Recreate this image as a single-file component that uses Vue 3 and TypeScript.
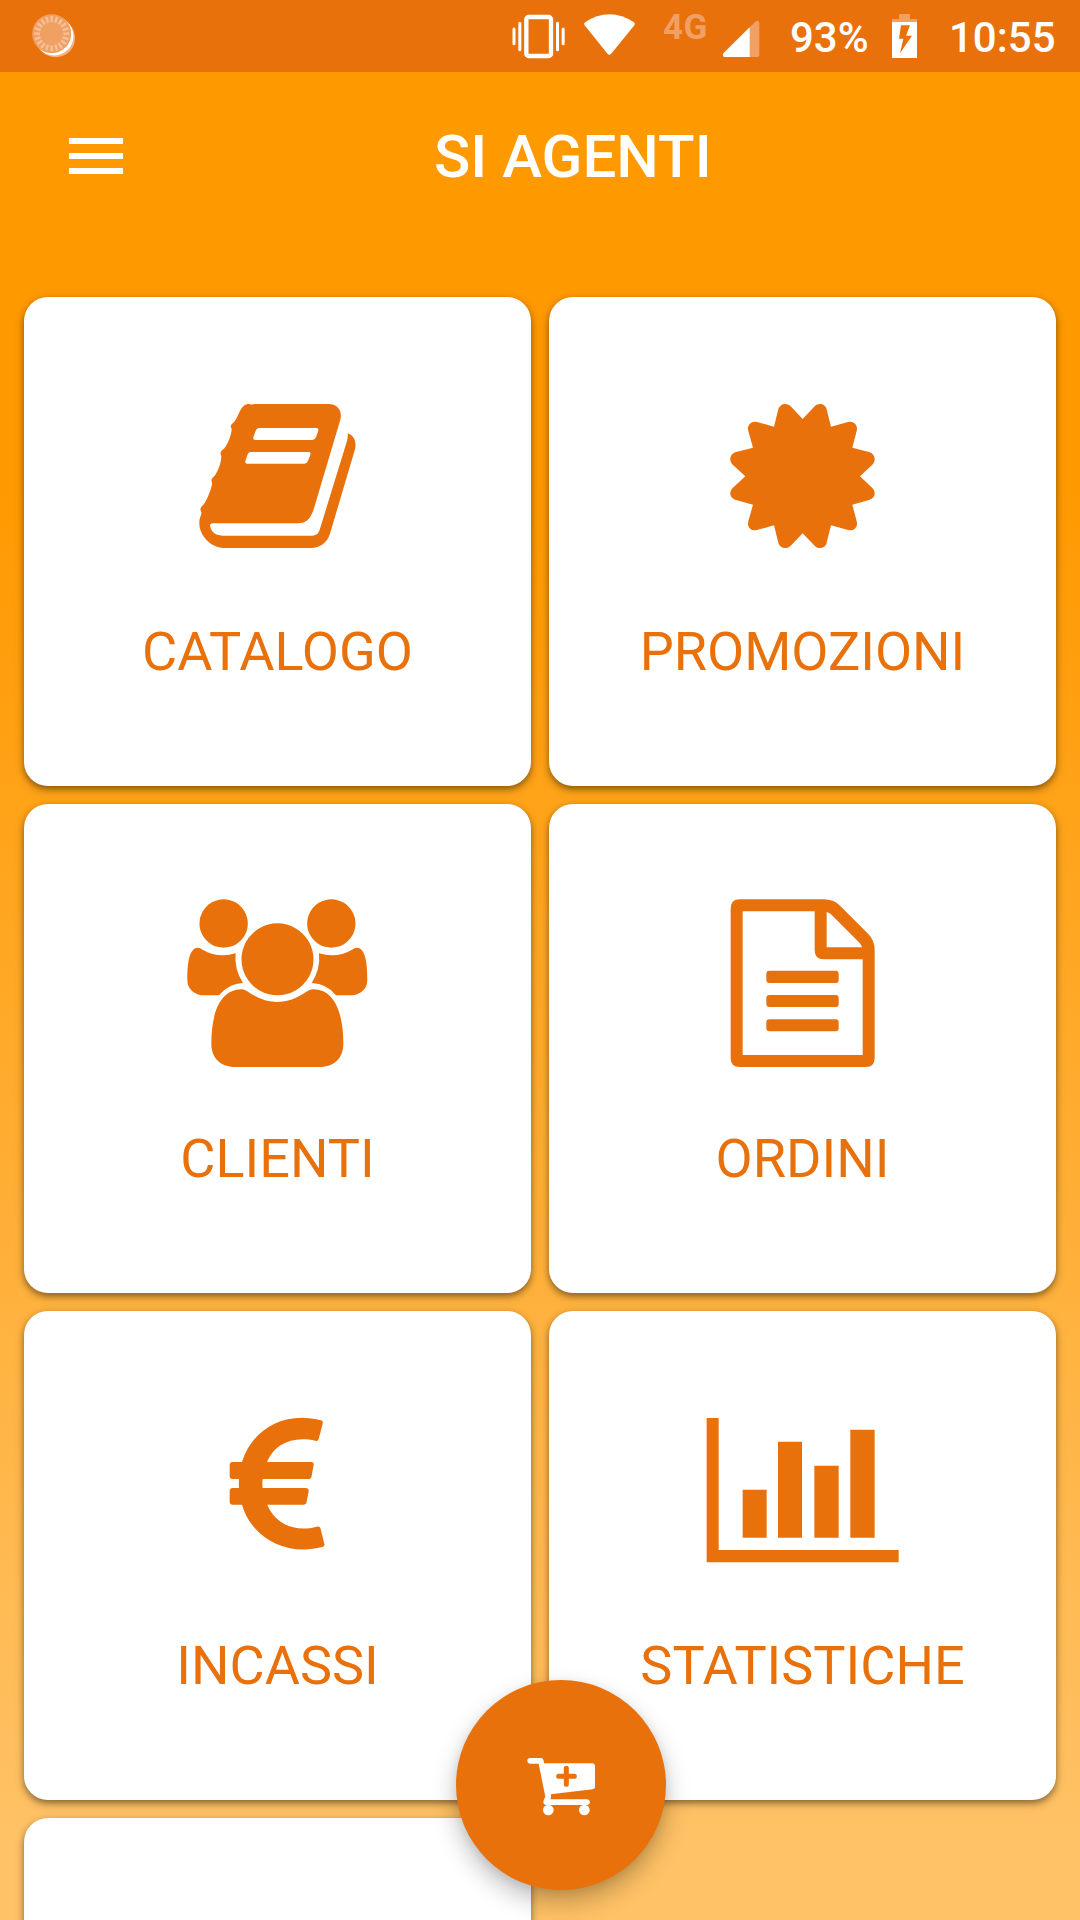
<script setup lang="ts">
interface Shape {
  d: string
}

interface Tile {
  label: string
  viewBox: string
  shapes: Shape[]
}

const tiles: Tile[] = [
  {
    label: 'CATALOGO',
    viewBox: '-36 -9 657 600',
    shapes: [
      {
        d: 'M203 72Q209 71 214 74Q218 72 226 72H446C472 72 488 92 481 119L402 385C392 417 379 430 353 430H98C91 430 89 435 91 441C95 458 109 467 130 467H393C408 467 416 461 420 446L501 183Q504 173 503 160C520 165 531 184 525 208L450 461C442 487 420 504 392 504H135C94 504 57 468 58 427C58 413 64 408 64 399C65 393 59 391 62 384C66 376 70 376 76 365C85 350 94 326 96 312C97 304 92 302 96 296C99 290 103 290 108 281C118 264 123 247 124 231C124 224 119 221 123 215C127 209 132 209 139 196C147 183 153 166 155 151C156 144 150 141 153 136C155 131 161 129 167 119C178 102 182 76 203 72ZM237 144Q230 144 227 152L220 172Q218 180 226 180H397Q405 180 408 172L415 152Q417 144 409 144ZM213 216Q206 216 203 223L196 243Q194 251 202 251H373Q381 251 384 243L391 224Q394 216 386 216Z',
      },
    ],
  },
  {
    label: 'PROMOZIONI',
    viewBox: '-51 -9 657 600',
    shapes: [
      {
        d: 'M278 117L314 79C325 66 347 71 350 88L363 140L414 126C431 121 445 136 440 153L427 203L477 216C494 220 500 241 487 254L450 289L487 324C500 337 494 356 477 360L427 374L440 424C445 441 431 455 414 450L363 436L350 488C347 504 325 510 314 497L278 460L242 497C230 510 209 504 205 488L192 436L141 450C124 455 110 441 115 424L129 374L78 360C61 356 55 337 68 324L106 289L68 254C55 241 61 220 78 216L129 203L115 153C110 136 124 121 141 126L192 140L205 88C209 71 230 66 242 79Z',
      },
    ],
  },
  {
    label: 'CLIENTI',
    viewBox: '-6 11 657 600',
    shapes: [
      { d: 'M161 57A72.500 72.500 0 1 1 160.900 57Z' },
      { d: 'M484 57A72.500 72.500 0 1 1 483.900 57Z' },
      { d: 'M322.500 129A108 108 0 1 1 322.400 129Z' },
      {
        d: 'M84 202Q90 202 98 208C128 225 160 230 197 219Q192 266 219 308Q175 310 147 345H106C74 345 52 328 52 298C52 258 55 202 84 202Z',
      },
      {
        d: 'M560 202Q554 202 546 208C516 225 485 230 447 219Q452 266 425 308Q471 310 498 345H538C570 345 592 328 592 298C592 258 589 202 560 202Z',
      },
      {
        d: 'M215 327Q223 326 235 335C294 375 351 375 408 335Q420 326 429 327C496 327 520 402 520 491C520 533 492 560 449 560H196C152 560 124 533 124 491C124 402 148 328 215 327Z',
      },
    ],
  },
  {
    label: 'ORDINI',
    viewBox: '-51 11 657 600',
    shapes: [
      {
        d: 'M89 57H341Q371 57 390 76L475 161Q494 180 494 210V533Q494 560 467 560H89Q62 560 62 533V84Q62 57 89 57ZM98 93V524H458V237H341Q314 237 314 210V93ZM350 95V201H456Q454 194 449 188L363 102Q358 97 350 95Z',
      },
      { d: 'M178 271H377Q386 271 386 280V299Q386 308 377 308H178Q169 308 169 299V280Q169 271 178 271Z' },
      { d: 'M178 344H377Q386 344 386 353V371Q386 380 377 380H178Q169 380 169 371V353Q169 344 178 344Z' },
      { d: 'M178 417H377Q386 417 386 426V444Q386 453 377 453H178Q169 453 169 444V426Q169 417 178 417Z' },
    ],
  },
  {
    label: 'INCASSI',
    viewBox: '-126 -28 657 600',
    shapes: [
      {
        d: 'M333 60Q340 62 338 70L326 116Q324 124 316 121C246 106 192 132 171 185H303Q312 185 311 194L305 226Q304 236 294 236H158Q156 250 158 263H287Q297 263 296 273L290 304Q289 313 280 313H172C194 367 250 398 321 379Q330 377 332 386L343 430Q345 438 337 440C221 470 121 404 96 313H68Q59 313 59 304V272Q59 263 68 263H87Q86 250 87 236H68Q59 236 59 227V194Q59 185 68 185H96C126 87 223 31 333 60Z',
      },
    ],
  },
  {
    label: 'STATISTICHE',
    viewBox: '9 -27 657 600',
    shapes: [
      { d: 'M50 54H86V450H626V487H50Z' },
      { d: 'M158 269H230V413H158Z' },
      { d: 'M264 125H336V413H264Z' },
      { d: 'M373 197H446V413H373Z' },
      { d: 'M481 89H554V413H481Z' },
    ],
  },
]

const ticks: number[] = Array.from({ length: 20 }, (_, i) => i * 18)
</script>

<template>
  <div class="screen">
    <div class="status">
      <svg class="sync" viewBox="0 0 240 216">
        <circle cx="167" cy="114" r="58" fill="#f4b380" />
        <circle cx="162" cy="108" r="58.500" fill="#fff" />
        <circle cx="155" cy="101" r="58.500" fill="#f1a064" />
        <path
          v-for="angle in ticks"
          :key="angle"
          d="M155 48V66"
          :transform="`rotate(${angle} 155 101)`"
          stroke="#f6c19a"
          stroke-width="7"
        />
      </svg>
      <svg class="ringer" viewBox="0 0 480 216">
        <rect x="109" y="51" width="74" height="117" rx="7" fill="none" stroke="#fff" stroke-width="13" />
        <path d="M72 87V131M89.500 70V149M202.500 70V149M219.500 87V131" stroke="#fff" stroke-width="9" stroke-linecap="round" />
        <path d="M285 67Q358 19 432 67Q437 71 433 76L363 162Q358 167 353 162L284 76Q280 71 285 67Z" fill="#fff" />
      </svg>
      <span class="network">4G</span>
      <svg class="signal" viewBox="690 0 120 216">
        <path d="M701 159L796 65Q808 58 808 70V164Q808 171 801 171H704Q695 168 701 159Z" fill="#f1a064" />
        <path d="M701 159L779 82V171H704Q695 168 701 159Z" fill="#fff" />
      </svg>
      <span class="level">93%</span>
      <svg class="battery" viewBox="336 0 75 216">
        <path d="M357 42H390V57H411V66H336V57H357Z" fill="#f1a064" />
        <path d="M336 66H411V174H336ZM363 76L357 116H370L360 160L396 107H378L390 76Z" fill="#fff" fill-rule="evenodd" />
      </svg>
      <span class="clock">10:55</span>
    </div>

    <header class="bar">
      <button class="menu" aria-label="Menu"><i /><i /><i /></button>
      <h1>SI AGENTI</h1>
    </header>

    <main class="grid">
      <section v-for="tile in tiles" :key="tile.label" class="card">
        <svg class="icon" :viewBox="tile.viewBox">
          <path v-for="(shape, i) in tile.shapes" :key="i" :d="shape.d" fill-rule="evenodd" />
        </svg>
        <span class="label">{{ tile.label }}</span>
      </section>
      <section class="card" />
    </main>

    <button class="fab" aria-label="Carrello">
      <svg viewBox="77 120 630 630">
        <path
          d="M300 354H333Q340 355 341 370H487Q494 371 494 378V440Q494 447 487 448L361 463Q364 469 360 478H471Q479 480 479 487Q479 494 471 495H348Q339 494 339 486Q339 480 345 470L325 371H300Q291 370 291 362Q291 355 300 354Z"
          fill="#fff"
        />
        <circle cx="354" cy="510" r="16" fill="#fff" />
        <circle cx="462" cy="510" r="16" fill="#fff" />
        <path d="M408 385V433M385 409H432" stroke="#e8710b" stroke-width="15" stroke-linecap="round" />
      </svg>
    </button>
  </div>
</template>

<style>
body {
  margin: 0;
}
</style>

<style scoped>
.screen {
  position: relative;
  width: 1080px;
  height: 1920px;
  overflow: hidden;
  font-family: Roboto, 'Liberation Sans', sans-serif;
  background: linear-gradient(to bottom, #ff9900 0, #ff9900 480px, #ffc266 1850px, #ffc266 100%);
}

svg {
  display: block;
}

button {
  padding: 0;
  border: 0;
  background: none;
}

.status {
  display: flex;
  height: 72px;
  background: #e8710b;
  color: #fff;
  font-size: 42px;
  font-weight: 500;
  line-height: 76px;
  white-space: nowrap;
}

.sync {
  width: 80px;
  height: 72px;
}

.ringer {
  width: 160px;
  height: 72px;
  margin-left: 410px;
}

.network {
  width: 67px;
  margin-left: 13px;
  font-size: 35px;
  font-weight: 700;
  letter-spacing: 0.5px;
  line-height: 56px;
  color: #f1a064;
}

.signal {
  width: 40px;
  height: 72px;
  margin-left: -10px;
}

.level {
  width: 102px;
  margin-left: 30px;
}

.battery {
  width: 25px;
  height: 72px;
}

.clock {
  margin-left: 32px;
}

.bar {
  display: flex;
  align-items: center;
  box-sizing: border-box;
  height: 168px;
  padding-left: 69px;
}

.menu {
  display: flex;
  flex-direction: column;
  gap: 9px;
  width: 54px;
}

.menu i {
  height: 6px;
  background: #fff;
}

h1 {
  margin: 0 0 0 311px;
  padding-top: 2px;
  color: #fff;
  font-size: 60px;
  font-weight: 500;
  line-height: 72px;
}

.grid {
  display: grid;
  grid-template-columns: 507px 507px;
  grid-auto-rows: 489px;
  gap: 18px;
  padding: 57px 24px 0;
}

.card {
  display: flex;
  flex-direction: column;
  align-items: center;
  box-sizing: border-box;
  padding-top: 80px;
  border-radius: 24px;
  background: #fff;
  box-shadow: 0 3px 6px rgba(0, 0, 0, 0.38), 0 4px 12px rgba(0, 0, 0, 0.14);
}

.icon {
  width: 219px;
  height: 200px;
  fill: #e8710b;
}

.label {
  margin-top: 43px;
  color: #e8710b;
  font-size: 54px;
  line-height: 64px;
}

.fab {
  position: absolute;
  top: 1680px;
  left: 456px;
  width: 210px;
  height: 210px;
  border-radius: 50%;
  background: #e8710b;
  box-shadow: 0 12px 24px rgba(0, 0, 0, 0.25), 0 2px 10px rgba(0, 0, 0, 0.08);
}
</style>
